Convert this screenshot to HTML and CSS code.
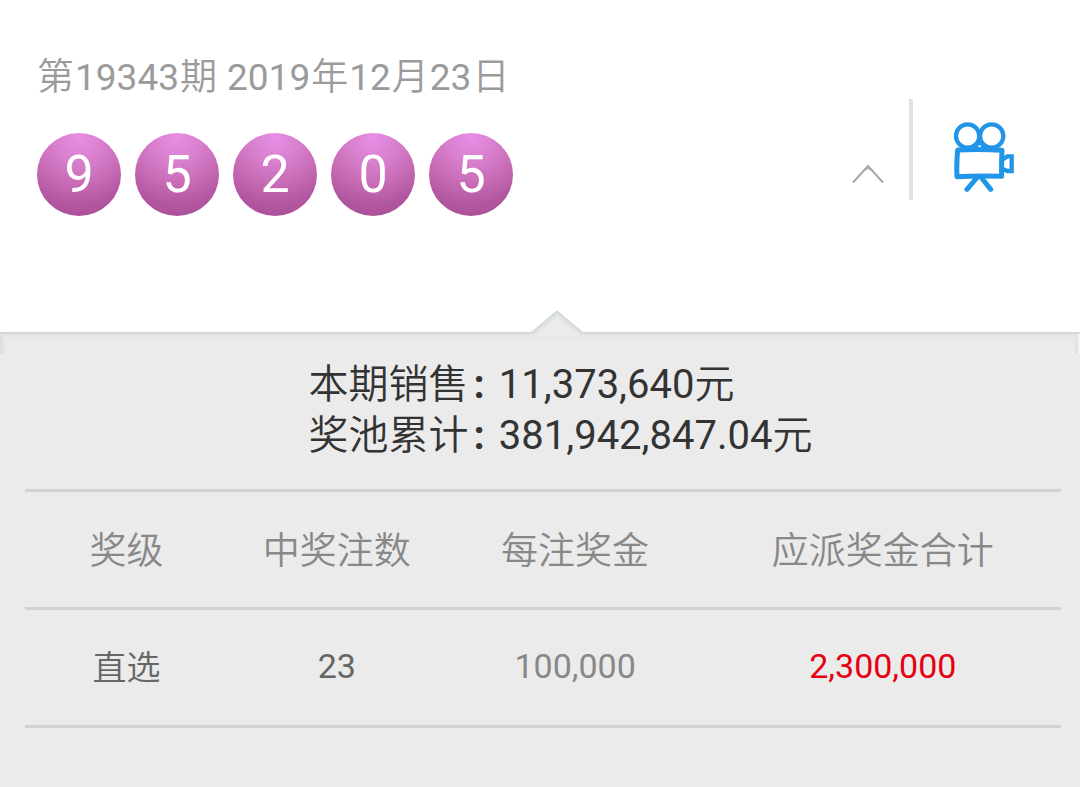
FILE: index.html
```html
<!DOCTYPE html>
<html lang="zh-CN">
<head>
<meta charset="utf-8">
<meta name="viewport" content="width=device-width, initial-scale=1">
<title>开奖详情</title>
<link rel="stylesheet" href="styles.css">
</head>
<body>
<header class="draw">
  <div class="draw-info">
    <h1 class="issue">第<span class="num">19343</span>期 <span class="num">2019</span>年<span class="num">12</span>月<span class="num">23</span>日</h1>
    <ol class="balls">
      <li class="ball">9</li>
      <li class="ball">5</li>
      <li class="ball">2</li>
      <li class="ball">0</li>
      <li class="ball">5</li>
    </ol>
  </div>
  <div class="actions">
    <button class="toggle" type="button" aria-label="收起">
      <svg width="32" height="20" viewBox="0 0 32 20" fill="none" stroke="#a8a8a8" stroke-width="2"><path d="M1 18.500 16 2 31 18.500"/><path d="M13 6 16 3 19 6"/></svg>
    </button>
    <button class="video" type="button" aria-label="开奖视频">
      <svg width="60" height="70" viewBox="372 95 180 210" fill="none" stroke="#2196e8" stroke-width="13">
        <circle cx="413" cy="137" r="35"/>
        <circle cx="485" cy="137" r="35"/>
        <path d="M388 158 404 176H494L510 158 500 180H398Z" fill="#2196e8" stroke="none"/>
        <path d="M440 158h18l14 18h-46z" fill="#2196e8" stroke="none"/>
        <circle cx="449" cy="169" r="4" fill="#fff" stroke="none"/>
        <path d="M383 179Q449 175 516 180Q514 220 515 258Q450 256 381 259Q379 220 383 179Z" stroke-width="15" stroke-linejoin="round"/>
        <path d="M518 207 532 198H545V242H532L518 236"/>
        <path d="M440 263 411 297M455 263 482 297" stroke-width="15" stroke-linecap="round"/>
      </svg>
    </button>
  </div>
</header>
<main class="panel">
  <svg class="notch" width="56" height="26" viewBox="0 0 56 26" aria-hidden="true">
    <path d="M0 26 2 23 28 1 54 23 56 26Z" fill="#ebebeb"/>
    <path d="M3 25 28 4 53 25" fill="none" stroke="#e1e4e4" stroke-width="4"/>
    <path d="M2 23.500 28 1.500 54 23.500" fill="none" stroke="#d3d8d8" stroke-width="2"/>
  </svg>
  <dl class="totals">
    <dt>本期销售<span class="colon">:</span></dt>
    <dd><span class="num">11,373,640</span>元</dd>
    <dt>奖池累计<span class="colon">:</span></dt>
    <dd><span class="num">381,942,847.04</span>元</dd>
  </dl>
  <table class="prizes">
    <thead>
      <tr>
        <th class="level">奖级</th>
        <th class="count">中奖注数</th>
        <th class="each">每注奖金</th>
        <th class="sum">应派奖金合计</th>
      </tr>
    </thead>
    <tbody>
      <tr>
        <td>直选</td>
        <td class="num">23</td>
        <td class="num muted">100,000</td>
        <td class="num total">2,300,000</td>
      </tr>
    </tbody>
  </table>
</main>
</body>
</html>
```

FILE: styles.css
```css
* {
  box-sizing: border-box;
}

body {
  display: flex;
  flex-direction: column;
  min-height: 100vh;
  margin: 0;
  background: #fff;
  font-family: Roboto, "Noto Sans CJK SC", sans-serif;
  font-weight: 350;
}

.num {
  font-weight: 400;
}

.draw {
  display: flex;
  justify-content: space-between;
  padding: 56px 38px 116px 37px;
}

.issue {
  margin: 0;
  color: #9b9b9b;
  font-size: 37px;
  font-weight: 350;
  line-height: 44px;
}

.issue .num {
  margin: 0 1px;
}

.balls {
  display: flex;
  gap: 14px;
  margin: 33px 0 0;
  padding: 0;
  list-style: none;
}

.ball {
  width: 84px;
  height: 83px;
  border-radius: 50%;
  background: radial-gradient(circle at 50% 5%, #e78fe6 0, #d87fcd 28%, #c86cb6 52%, #b256a0 76%, #a44c93 100%);
  color: #fff;
  font-size: 52px;
  font-weight: 400;
  line-height: 83px;
  text-align: center;
}

.actions {
  display: flex;
  align-items: center;
  margin-top: 43px;
  height: 101px;
}

.toggle,
.video {
  display: flex;
  height: 100%;
  border: 0;
  background: none;
  cursor: pointer;
}

.toggle {
  align-items: flex-start;
  padding: 65px 25px 0 24px;
}

.video {
  align-items: center;
  padding: 14px 28px 0 41px;
  border-left: 4px solid #e1e1e1;
}

.panel {
  position: relative;
  flex: 1;
  padding: 25px 19px 58px 25px;
  border-top: 2px solid #d6d8d8;
  background:
    linear-gradient(90deg, #dedede, #ebebeb) 0 0 / 6px 20px no-repeat,
    linear-gradient(270deg, #f4f4f4 2px, #dedede 2px, #ebebeb) 100% 0 / 6px 20px no-repeat,
    linear-gradient(#e1e3e3, #ebebeb) 0 0 / 100% 6px no-repeat,
    #ebebeb;
}

.notch {
  position: absolute;
  top: -24px;
  left: calc(50% + 17px);
  margin-left: -28px;
}

.totals {
  display: grid;
  grid-template-columns: auto auto;
  justify-content: center;
  margin: 0 0 28px;
  padding-left: 35px;
  color: #333;
  font-size: 40px;
  line-height: 51px;
}

.totals dd {
  margin: 0;
}

.colon {
  padding: 0 14px 0 5px;
  font-weight: 700;
}

.prizes {
  width: 100%;
  border-collapse: collapse;
  border-top: 3px solid #d2d2d2;
  table-layout: fixed;
  color: #666;
  font-size: 34px;
  line-height: 40px;
  text-align: center;
}

.prizes tr {
  height: 118px;
  border-bottom: 3px solid #d2d2d2;
}

.prizes th,
.prizes td {
  padding: 0;
}

.prizes th {
  padding-top: 4px;
  color: #888;
  font-size: 37px;
  font-weight: 350;
}

.prizes .num {
  padding-bottom: 4px;
}

.level {
  width: 19.6%;
}

.count {
  width: 21%;
}

.each {
  width: 25%;
}

.sum {
  width: 34.4%;
}

.prizes .muted {
  color: #888;
}

.prizes .total {
  color: #e60012;
}
```
